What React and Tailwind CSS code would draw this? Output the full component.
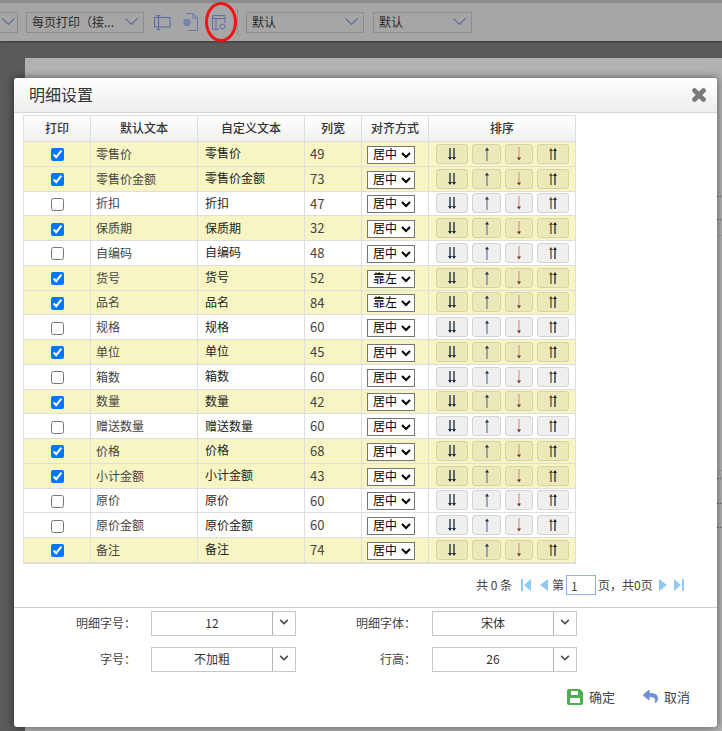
import React from "react";
import { FaReply, FaChevronDown } from "react-icons/fa";

const FONT = "font-['Noto_Sans_CJK_SC','Liberation_Sans',sans-serif]";

const rows = [
  ["零售价", 49, "居中", true],
  ["零售价金额", 73, "居中", true],
  ["折扣", 47, "居中", false],
  ["保质期", 32, "居中", true],
  ["自编码", 48, "居中", false],
  ["货号", 52, "靠左", true],
  ["品名", 84, "靠左", true],
  ["规格", 60, "居中", false],
  ["单位", 45, "居中", true],
  ["箱数", 60, "居中", false],
  ["数量", 42, "居中", true],
  ["赠送数量", 60, "居中", false],
  ["价格", 68, "居中", true],
  ["小计金额", 43, "居中", true],
  ["原价", 60, "居中", false],
  ["原价金额", 60, "居中", false],
  ["备注", 74, "居中", true],
];

function Chevron() {
  return (
    <svg width="13" height="8" viewBox="0 0 13 8" className="shrink-0">
      <polyline points="0.5,0.5 6.5,6.5 12.5,0.5" fill="none" stroke="#5a6ca8" strokeWidth="1.2" />
    </svg>
  );
}

function ToolSelect({ label, className }) {
  return (
    <div className={`flex h-[21px] items-center justify-between border border-[#8e8e8e] pl-[5px] pr-[5px] text-[12px] text-[#2b2b2b] ${className}`}>
      <span className="whitespace-nowrap">{label}</span>
      <Chevron />
    </div>
  );
}

function DoubleDown() {
  return (
    <svg width="10" height="12" viewBox="0 0 10 12">
      <path d="M3 0V11M7 0V11" stroke="#1b2a3a" strokeWidth="1.3" />
      <path d="M1 9L3 12L5 9ZM5 9L7 12L9 9Z" fill="#1b2a3a" />
    </svg>
  );
}
function DoubleUp() {
  return (
    <svg width="10" height="12" viewBox="0 0 10 12">
      <path d="M3 1V12" stroke="#7a4a10" strokeWidth="1.3" />
      <path d="M7 1V12" stroke="#1b2a3a" strokeWidth="1.3" />
      <path d="M1 3L3 0L5 3Z" fill="#7a4a10" />
      <path d="M5 3L7 0L9 3Z" fill="#1b2a3a" />
    </svg>
  );
}
function Up() {
  return (
    <svg width="8" height="14" viewBox="0 0 8 14">
      <path d="M4 2V14" stroke="#5a6a8c" strokeWidth="1.1" />
      <path d="M2 3.5L4 0.5L6 3.5Z" fill="#1f2c5c" />
    </svg>
  );
}
function Down() {
  return (
    <svg width="8" height="14" viewBox="0 0 8 14">
      <path d="M4 0V12" stroke="#d98c80" strokeWidth="1.1" />
      <path d="M2 10.5L4 13.5L6 10.5Z" fill="#7a2a20" />
    </svg>
  );
}

function SortButton({ children, className, yellow }) {
  return (
    <button
      className={`flex h-[20px] items-center justify-center rounded-[3px] border ${
        yellow ? "border-[#d6d4a6] bg-[#ebe9ba]" : "border-[#d4d4d4] bg-[#efefef]"
      } ${className}`}
    >
      {children}
    </button>
  );
}

function Row({ name, width, align, checked }) {
  return (
    <div
      className={`flex h-[24.76px] items-center border-b border-[#dedede] text-[12px] text-[#444] ${
        checked ? "bg-[#f7f5c3]" : "bg-white"
      }`}
    >
      <div className="flex h-full w-[67px] items-center justify-center border-r border-[#dedede]">
        <input type="checkbox" defaultChecked={checked} className="m-0 mt-[2px] h-[13px] w-[13px]" />
      </div>
      <div className="flex h-full w-[107px] items-center border-r border-[#dedede] pl-[5px]">{name}</div>
      <div className="flex h-full w-[107px] items-center border-r border-[#dedede] pb-[1px] pl-[7px] text-[#222]">{name}</div>
      <div className="flex h-full w-[57px] items-center border-r border-[#dedede] pl-[5px] text-[13px]">{width}</div>
      <div className="flex h-full w-[67px] items-center border-r border-[#dedede] pl-[5px]">
        <select
          defaultValue={align}
          className="mt-[2px] h-[18px] w-[48px] rounded-none border border-[#767676] bg-white py-0 pl-[1px] font-['Liberation_Sans','Noto_Sans_CJK_SC',sans-serif] text-[12px] leading-none text-black"
        >
          <option>居中</option>
          <option>靠左</option>
          <option>靠右</option>
        </select>
      </div>
      <div className="flex h-full flex-1 items-center pl-[7px]">
        <SortButton yellow={checked} className="w-[32px]"><DoubleDown /></SortButton>
        <SortButton yellow={checked} className="ml-[4px] w-[29px]"><Up /></SortButton>
        <SortButton yellow={checked} className="ml-[4px] w-[28px]"><Down /></SortButton>
        <SortButton yellow={checked} className="ml-[4px] w-[32px]"><DoubleUp /></SortButton>
      </div>
    </div>
  );
}

function HeaderCell({ className, children }) {
  return (
    <div className={`flex h-full items-center justify-center border-r border-[#dedede] pb-[1px] ${className}`}>{children}</div>
  );
}

function Combo({ value }) {
  return (
    <div className="flex h-[25px] w-[145px] items-center border border-[#c8c8c8] bg-white text-[12px] text-[#333]">
      <div className="flex h-full flex-1 items-center justify-center border-r border-[#b5b5b5]">{value}</div>
      <div className="flex h-full w-[22px] items-center justify-center pb-[2px] text-[#4d4d4d]">
        <FaChevronDown size={10} />
      </div>
    </div>
  );
}

function PageIcon({ d }) {
  return (
    <svg width="11" height="14" viewBox="0 0 11 14">
      <path d={d} fill="#8ecaf2" />
    </svg>
  );
}

function Crumb({ className }) {
  return <div className={`absolute left-[692px] w-[40px] ${className}`} />;
}

export default function App() {
  return (
    <div className={`relative h-[731px] w-[722px] overflow-hidden bg-[#5a5a5a] ${FONT}`}>
      {/* Toolbar behind the mask */}
      <div className="border-t-[3px] border-[#8c8c8c] bg-[#a6a6a6] shadow-[0_1px_2px_rgba(0,0,0,0.4)]">
        <div className="flex h-[38px] items-center">
          <ToolSelect label="" className="ml-[-4px] w-[22px]" />
          <ToolSelect label="每页打印（接..." className="ml-[8px] w-[118px]" />
          <svg width="17" height="15" viewBox="0 0 17 15" className="ml-[10px]" fill="none" stroke="#5a6ca8" strokeWidth="1.1">
            <rect x="0.5" y="2.5" width="15.5" height="9.5" />
            <path d="M2.5 0.5H6.5M4.5 0.5V14.5M2.5 14.5H6.5" />
          </svg>
          <svg width="16" height="18" viewBox="0 0 16 18" className="ml-[11px]" fill="none" stroke="#6f7ca8" strokeWidth="1.1">
            <path d="M4 0.5H11L15.5 5V17.5H6" />
            <path d="M11 0.5V5H15.5" />
            <circle cx="5" cy="9.5" r="3" fill="#7c88ae" />
          </svg>
          <svg width="14" height="15" viewBox="0 0 14 15" className="ml-[14px]" fill="none" stroke="#5a6ca8" strokeWidth="1">
            <path d="M13 8V0.6H0.6V14.4H7M0.6 3.5H13M4 3.5V14.4" />
            <circle cx="10.5" cy="11.5" r="2.4" />
          </svg>
          <div className="ml-[11px] mr-[8px] h-[26px] w-px bg-[#8e8e8e]" />
          <ToolSelect label="默认" className="w-[118px]" />
          <ToolSelect label="默认" className="ml-[9px] w-[99px]" />
        </div>
      </div>

      {/* Print sheet behind the mask, only its right edge shows past the dialog */}
      <div className="relative ml-[25px] mt-[17px] h-[680px] bg-[#b2b2b2]">
        <Crumb className="top-[138px] border-t border-dotted border-[#666]" />
        <Crumb className="top-[161px] border-t border-dotted border-[#666]" />
        <Crumb className="top-[177px] border-t border-[#a0a0a0]" />
        <Crumb className="top-[412px] border-t border-[#a0a0a0]" />
        <Crumb className="top-[420px] border-t border-dotted border-[#666]" />
        <Crumb className="top-[445px] border-t border-dotted border-[#666]" />
        <Crumb className="top-[469px] border-t border-dotted border-[#666]" />
      </div>

      {/* Red highlight circle */}
      <div className="absolute left-[205px] top-[2px] h-[40px] w-[32px] rounded-[50%] border-[3px] border-[#f01414]" />

      {/* Dialog */}
      <div className="absolute left-[14px] top-[78px] flex h-[649px] w-[703px] flex-col rounded-[3px] bg-white shadow-[0_0_8px_rgba(0,0,0,0.55)]">
        <div className="flex h-[35px] shrink-0 items-center justify-between rounded-t-[3px] border-b border-[#d6d6d6] bg-gradient-to-b from-white to-[#eeeeee] pl-[15px] pr-[11px]">
          <span className="mb-[2px] text-[16px] text-[#333]">明细设置</span>
          <svg width="14" height="14" viewBox="0 0 14 14">
            <path d="M2.5 2.5L11.5 11.5M11.5 2.5L2.5 11.5" stroke="#7a7a7a" strokeWidth="4.6" strokeLinecap="round" />
          </svg>
        </div>

        <div className="ml-[9px] mt-[2px] w-[553px] shrink-0 border border-[#dedede]">
          <div className="flex h-[26px] items-center border-b border-[#dedede] bg-gradient-to-b from-white to-[#f0f0f0] text-[12px] font-medium text-[#333]">
            <HeaderCell className="w-[67px]">打印</HeaderCell>
            <HeaderCell className="w-[107px]">默认文本</HeaderCell>
            <HeaderCell className="w-[107px]">自定义文本</HeaderCell>
            <HeaderCell className="w-[57px]">列宽</HeaderCell>
            <HeaderCell className="w-[67px]">对齐方式</HeaderCell>
            <div className="flex flex-1 items-center justify-center pb-[1px]">排序</div>
          </div>
          {rows.map(([name, width, align, checked]) => (
            <Row key={name} name={name} width={width} align={align} checked={checked} />
          ))}
        </div>

        {/* Pagination */}
        <div className="mt-[11px] flex h-[21px] shrink-0 items-center pl-[462px] text-[12px] text-[#444]">
          <span className="w-[37px] whitespace-nowrap">共 0 条</span>
          <span className="ml-[8px]"><PageIcon d="M0 1H2V13H0ZM10 1V13L3 7Z" /></span>
          <span className="ml-[7px]"><PageIcon d="M9 1V13L1 7Z" /></span>
          <span className="ml-[2px]">第</span>
          <input
            defaultValue="1"
            className="ml-[2px] h-[20px] w-[30px] border border-[#8fb2e2] bg-white px-[4px] text-[12px] text-[#444]"
          />
          <span className="ml-[2px] w-[57px] whitespace-nowrap">页，共0页</span>
          <span className="ml-[3px]"><PageIcon d="M1 1L9 7L1 13Z" /></span>
          <span className="ml-[5px]"><PageIcon d="M0 1L7 7L0 13ZM8 1H10V13H8Z" /></span>
        </div>

        {/* Settings form */}
        <div className="mt-[11px] shrink-0 border-t border-[#cfcfcf] pt-[3px] text-[12px] text-[#444]">
          <div className="flex items-center">
            <div className="w-[122px] text-right">明细字号：</div>
            <div className="ml-[15px]"><Combo value="12" /></div>
            <div className="w-[120px] text-right">明细字体：</div>
            <div className="ml-[16px]"><Combo value="宋体" /></div>
          </div>
          <div className="mt-[11px] flex items-center">
            <div className="w-[122px] text-right">字号：</div>
            <div className="ml-[15px]"><Combo value="不加粗" /></div>
            <div className="w-[120px] text-right">行高：</div>
            <div className="ml-[16px]"><Combo value="26" /></div>
          </div>
        </div>

        {/* Actions */}
        <div className="mt-[15px] flex shrink-0 items-center pl-[553px] text-[13px] text-[#444]">
          <svg width="16" height="16" viewBox="0 0 16 16">
            <path fillRule="evenodd" d="M2 0H13L16 3V14A2 2 0 0 1 14 16H2A2 2 0 0 1 0 14V2A2 2 0 0 1 2 0ZM4 2V6H11V2ZM3 9V14H13V9Z" fill="#4caf50" />
          </svg>
          <span className="ml-[6px]">确定</span>
          <FaReply size={15} className="ml-[28px] text-[#6f8fd8]" />
          <span className="ml-[6px]">取消</span>
        </div>
      </div>
    </div>
  );
}
